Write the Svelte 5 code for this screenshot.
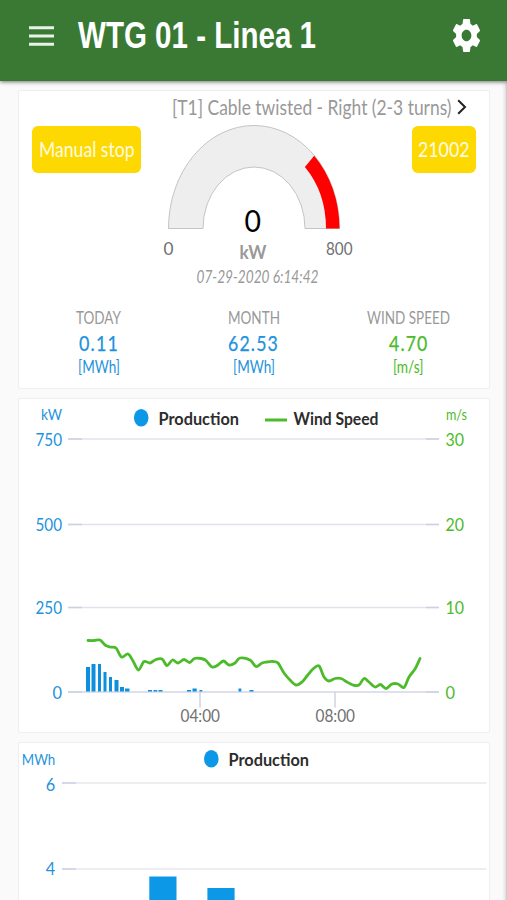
<script>
  const stats = [
    { label: 'TODAY', lw: 45, value: '0.11', vw: 40, unit: '[MWh]', uw: 42, color: '#1d93dd' },
    { label: 'MONTH', lw: 52, value: '62.53', vw: 51, unit: '[MWh]', uw: 42, color: '#1d93dd' },
    { label: 'WIND SPEED', lw: 83, value: '4.70', vw: 39.5, unit: '[m/s]', uw: 30.5, color: '#4cbb2a' }
  ];

  const grid = [
    { y: 439, left: '750', lw: 26.5, right: '30', rw: 18.5 },
    { y: 524.5, left: '500', lw: 26.5, right: '20', rw: 18.5 },
    { y: 607.5, left: '250', lw: 26.5, right: '10', rw: 18.5 },
    { y: 692, left: '0', lw: 9.5, right: '0', rw: 9.5 }
  ];

  // x, width, top
  const bars = [
    [86, 4, 667], [91.5, 4, 664], [98, 3, 664], [103.5, 3, 672], [109, 3, 677],
    [114.5, 4, 680], [120, 4, 687], [125, 4.5, 688.5], [148, 4, 690], [153.5, 3.7, 690],
    [158.5, 4, 690], [187, 4, 690], [192.5, 4.2, 688.5], [199.5, 2.8, 690],
    [238.5, 2.8, 688.5], [249.5, 4, 690]
  ];

  const wind = [
    [88, 640.5], [94, 640.5], [100, 640], [105, 645], [110, 647], [116, 648], [121.5, 657],
    [128, 654], [133, 661], [138.5, 670], [144, 661.5], [150, 663], [156, 659.5], [162, 659],
    [167, 665.5], [172.5, 660], [178, 663], [184, 659.5], [189.5, 662.5], [194.5, 658.5],
    [201, 658.5], [206, 660.5], [212, 667], [218, 665], [223.5, 661], [229, 665], [235, 663],
    [240, 658], [250, 660], [256, 666.5], [262, 663], [267, 662], [273, 661.5], [278, 663],
    [284, 673], [290, 680], [296, 685], [302, 682], [307, 676], [313, 669], [319, 666],
    [324, 677], [329, 681], [335, 678.5], [341, 678.5], [347, 682], [353, 685], [359, 685],
    [364, 678.5], [369, 682], [375, 687], [380.5, 684.5], [386, 688.5], [392, 684],
    [398, 684], [404, 687.5], [409, 677], [415, 669], [420, 658.5]
  ];

  function smooth(p) {
    let d = `M${p[0][0]} ${p[0][1]}`;
    for (let i = 0; i < p.length - 1; i++) {
      const a = p[i - 1] ?? p[i], b = p[i], c = p[i + 1], e = p[i + 2] ?? c;
      d += `C${b[0] + (c[0] - a[0]) / 6} ${b[1] + (c[1] - a[1]) / 6} ${c[0] - (e[0] - b[0]) / 6} ${c[1] - (e[1] - b[1]) / 6} ${c[0]} ${c[1]}`;
    }
    return d;
  }
  const windPath = smooth(wind);
</script>

{#snippet fit(text, width, size)}
  <svg class="fit" {width} height={size * 1.2}>
    <text x="0" y={size} font-size={size} textLength={width} lengthAdjust="spacingAndGlyphs">{text}</text>
  </svg>
{/snippet}

{#snippet label(text, x, y, width, size, cls)}
  <text class={cls} {x} {y} font-size={size} textLength={width} lengthAdjust="spacingAndGlyphs">{text}</text>
{/snippet}

<div class="page">
  <header>
    <svg class="menu" width="25" height="20" viewBox="0 0 25 20">
      <path d="M0 1.8H25M0 10H25M0 18.2H25" stroke="#e9f2e8" stroke-width="3.1" />
    </svg>
    <h1>{@render fit('WTG 01 - Linea 1', 238, 36)}</h1>
    <svg class="gear" width="27" height="33" viewBox="2.27 2 19.46 20" preserveAspectRatio="none">
      <path fill="#fff" d="M19.43 12.98c.04-.32.07-.64.07-.98s-.03-.66-.07-.98l2.11-1.65c.19-.15.24-.42.12-.64l-2-3.46c-.12-.22-.39-.3-.61-.22l-2.49 1c-.52-.4-1.08-.73-1.69-.98l-.38-2.65C14.46 2.18 14.25 2 14 2h-4c-.25 0-.46.18-.49.42l-.38 2.65c-.61.25-1.17.59-1.69.98l-2.49-1c-.23-.09-.49 0-.61.22l-2 3.46c-.13.22-.07.49.12.64l2.11 1.65c-.04.32-.07.65-.07.98s.03.66.07.98l-2.11 1.65c-.19.15-.24.42-.12.64l2 3.46c.12.22.39.3.61.22l2.49-1c.52.4 1.08.73 1.69.98l.38 2.65c.03.24.24.42.49.42h4c.25 0 .46-.18.49-.42l.38-2.65c.61-.25 1.17-.59 1.69-.98l2.49 1c.23.09.49 0 .61-.22l2-3.46c.12-.22.07-.49-.12-.64l-2.11-1.65zM12 15.5c-1.93 0-3.5-1.57-3.5-3.5s1.57-3.5 3.5-3.5 3.5 1.57 3.5 3.5-1.57 3.5-3.5 3.5z" />
    </svg>
  </header>

  <main>
    <section class="card status">
      <div class="alert">
        {@render fit('[T1] Cable twisted - Right (2-3 turns)', 279.5, 20.5)}
        <svg class="chevron" width="10" height="16" viewBox="0 0 10 16">
          <path d="M1.2 1.2L8 8L1.2 14.8" fill="none" stroke="#222" stroke-width="2" />
        </svg>
      </div>

      <div class="overview">
        <div class="badge state">{@render fit('Manual stop', 95.5, 21.5)}</div>
        <svg class="gauge" width="196" height="172" viewBox="160 119 196 172">
          <path d="M168.5 228.5A85.5 103 0 0 1 339.5 228.5H305A51 61.5 0 0 0 203 228.5Z" fill="#eee" stroke="#c4c4c4" />
          <path d="M314.2 155.7A85.5 103 0 0 1 339.5 228.5H326A72 87 0 0 0 304.9 167Z" fill="#f00" />
          {@render label('0', 244.5, 232, 16.5, 31, 'reading')}
          {@render label('kW', 239.5, 259.3, 27, 18.5, 'unit')}
          {@render label('0', 163.5, 254.5, 10, 17.8, 'limit')}
          {@render label('800', 326, 254.5, 26.5, 17.8, 'limit')}
          {@render label('07-29-2020 6:14:42', 196.5, 283.3, 122, 17, 'date')}
        </svg>
        <div class="badge code">{@render fit('21002', 51.5, 21.5)}</div>
      </div>

      <div class="stats">
        {#each stats as s}
          <div class="stat" style="color: {s.color}">
            <div class="name">{@render fit(s.label, s.lw, 16.5)}</div>
            <div class="value">{@render fit(s.value, s.vw, 21.5)}</div>
            <div class="units">{@render fit(s.unit, s.uw, 16.5)}</div>
          </div>
        {/each}
      </div>
    </section>

    <section class="card power">
      <svg width="470" height="333" viewBox="19 399 470 333">
        {#each grid as g, i}
          <path d="M68 {g.y}H439" stroke={i === 3 ? '#d3d6e8' : '#e2e2ea'} stroke-width="1.5" />
          <path d="M68 {g.y}H82M426 {g.y}H439" stroke="#cbd1e6" stroke-width="1.5" />
          {@render label(g.left, 62 - g.lw, g.y + 6.5, g.lw, 17.5, 'blue')}
          {@render label(g.right, 445.5, g.y + 6.5, g.rw, 17.5, 'green')}
        {/each}
        <path d="M200 692V707.5M335 692V707.5" stroke="#d0d3e2" stroke-width="1.5" />
        {@render label('kW', 41, 420.3, 21, 16, 'blue')}
        {@render label('m/s', 446, 420.3, 21, 16, 'green')}
        <ellipse cx="141.2" cy="417.8" rx="7.3" ry="8.8" fill="#0c98e6" />
        {@render label('Production', 158.5, 425.2, 80.5, 17.3, 'legend')}
        <path d="M265 420H287" stroke="#4cbb2a" stroke-width="3" />
        {@render label('Wind Speed', 293.5, 425.2, 85, 17.3, 'legend')}
        {#each bars as [x, w, top]}
          <rect {x} y={top} width={w} height={691.5 - top} fill="#0c8fdc" />
        {/each}
        <path d={windPath} fill="none" stroke="#4cbb2a" stroke-width="2.8" stroke-linecap="round" stroke-linejoin="round" />
        {@render label('04:00', 180.5, 722.3, 39.5, 17.5, 'time')}
        {@render label('08:00', 315.5, 722.3, 39.5, 17.5, 'time')}
      </svg>
    </section>

    <section class="card energy">
      <svg width="470" height="157" viewBox="19 743 470 157">
        <path d="M62 783H486.5M62 869H486.5" stroke="#e8e8ee" stroke-width="1.5" />
        <path d="M62 783H76M62 869H76" stroke="#cbd1e6" stroke-width="1.5" />
        {@render label('MWh', 21.8, 764.9, 33.5, 16, 'blue')}
        {@render label('6', 45.8, 790.7, 9.5, 17.3, 'blue')}
        {@render label('4', 45.8, 874.7, 9.5, 17.3, 'blue')}
        <ellipse cx="211.3" cy="758.7" rx="7.3" ry="8.8" fill="#0c98e6" />
        {@render label('Production', 228.5, 766.2, 80.5, 17.3, 'legend')}
        <rect x="149.3" y="876.5" width="27.2" height="24" fill="#0c98e6" />
        <rect x="207.4" y="888" width="27.2" height="12" fill="#0c98e6" />
      </svg>
    </section>
  </main>
</div>

<style>
  :global(body) {
    background: #fafafa;
  }
  .page {
    width: 507px;
    height: 900px;
    overflow: hidden;
    display: flex;
    flex-direction: column;
    background: linear-gradient(to right, transparent 502px, #e9e9e9 505px, #c4c4c4 507px), #fafafa;
    font-family: Lato, "Noto Sans", sans-serif;
  }
  svg {
    display: block;
    flex: none;
  }
  .fit {
    overflow: visible;
    fill: currentColor;
  }
  header {
    box-sizing: border-box;
    position: relative;
    z-index: 1;
    height: 81px;
    flex: none;
    display: flex;
    align-items: flex-start;
    padding: 0 27px 0 29px;
    background: #397934;
    box-shadow: 0 1px 4px rgba(0, 0, 0, 0.55);
    color: #fff;
  }
  .menu {
    margin-top: 25.5px;
  }
  h1 {
    margin: 12px 0 0 23.5px;
    font-family: "Liberation Sans", Arial, sans-serif;
    font-weight: 700;
    font-size: 36px;
  }
  .gear {
    margin: 19px 0 0 auto;
  }
  main {
    display: flex;
    flex-direction: column;
    gap: 9px;
    padding: 9px 0 0 18px;
  }
  .card {
    box-sizing: border-box;
    width: 472px;
    flex: none;
    border: 1px solid #efefef;
    border-radius: 2px;
    background: #fff;
  }
  .status {
    height: 299px;
    padding-top: 4px;
  }
  .power {
    height: 335px;
  }
  .energy {
    height: 160px;
  }
  .alert {
    display: flex;
    justify-content: flex-end;
    height: 24px;
    padding-right: 22px;
    color: #999;
  }
  .alert .fit {
    margin-top: -1px;
  }
  .chevron {
    margin: 4px 0 0 6px;
  }
  .overview {
    display: flex;
    align-items: flex-start;
    height: 172px;
    padding-left: 13px;
  }
  .badge {
    box-sizing: border-box;
    height: 47px;
    margin-top: 7px;
    padding-top: 9.3px;
    display: flex;
    justify-content: center;
    flex: none;
    border-radius: 6px;
    background: #fdd901;
    color: #fffbe2;
  }
  .state {
    width: 108.5px;
  }
  .gauge {
    margin-left: 19.5px;
  }
  .code {
    width: 64.5px;
    margin-left: 55.5px;
  }
  .stats {
    display: grid;
    grid-template-columns: repeat(3, 155px);
    padding-left: 2px;
  }
  .stat {
    display: flex;
    flex-direction: column;
    align-items: center;
  }
  .name {
    margin-top: 15.5px;
    color: #999;
  }
  .value {
    margin-top: 2.5px;
    letter-spacing: 1.4px;
    stroke: currentColor;
    stroke-width: 0.25px;
  }
  .units {
    margin-top: 1.5px;
  }
  .reading {
    fill: #000;
  }
  .unit {
    fill: #999;
    font-weight: 700;
  }
  .limit,
  .time {
    fill: #707070;
  }
  .date {
    fill: #999;
    font-style: italic;
  }
  .blue {
    fill: #1d93dd;
  }
  .green {
    fill: #4cbb2a;
  }
  .legend {
    fill: #2d2d2d;
    font-weight: 700;
  }
</style>
